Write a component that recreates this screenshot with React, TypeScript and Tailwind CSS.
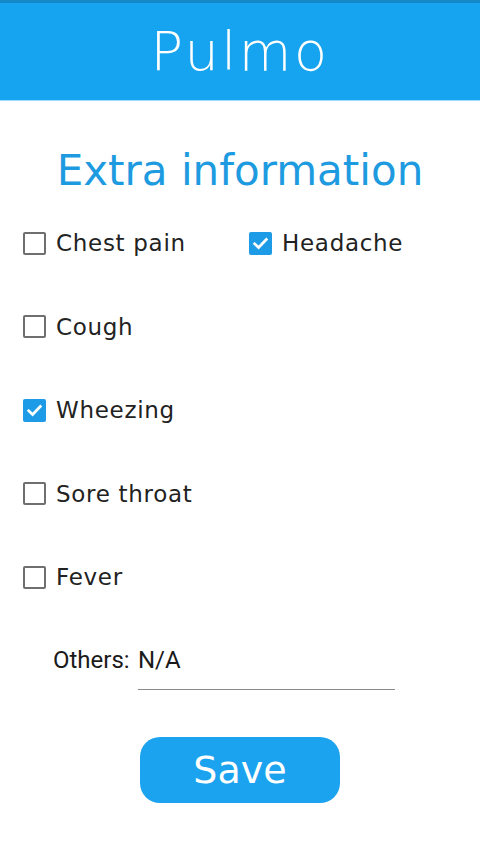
import React from 'react';

const items = [
  { label: 'Chest pain', checked: false },
  { label: 'Cough', checked: false },
  { label: 'Wheezing', checked: true },
  { label: 'Sore throat', checked: false },
  { label: 'Fever', checked: false },
];

function Box({ checked }: { checked: boolean }) {
  if (checked) {
    return (
      <span className="flex h-[23px] w-[23px] items-center justify-center rounded-[2px] bg-[#1e9be6]">
        <svg width="17" height="17" viewBox="0 0 16 16" fill="none">
          <path d="M2.5 8.3 L6.2 11.8 L13.5 4.2" stroke="white" strokeWidth="2.5" strokeLinecap="square" />
        </svg>
      </span>
    );
  }
  return <span className="block h-[23px] w-[23px] rounded-[2px] border-2 border-[#6f6f6f]" />;
}

function Item({ label, checked }: { label: string; checked: boolean }) {
  return (
    <label className="flex items-center gap-[10px]">
      <Box checked={checked} />
      <span
        className="text-[23px] leading-[34px] tracking-[0.7px] text-[#222]"
        style={{ fontFamily: '"DejaVu Sans", sans-serif' }}
      >
        {label}
      </span>
    </label>
  );
}

export default function App() {
  return (
    <div className="min-h-[854px] bg-white">
      {/* header */}
      <header className="flex h-[100px] items-center justify-center bg-[#16a3ef] border-t-[3px] border-[#1488c8] shadow-[0_1px_0_#9fdcfb]">
        <h1
          className="text-[54px] font-extralight text-white tracking-[2.5px] leading-none"
          style={{ fontFamily: '"DejaVu Sans", sans-serif' }}
        >
          Pulmo
        </h1>
      </header>

      <h2
        className="mt-[50px] text-center text-[42px] text-[#1e9be0] leading-none"
        style={{ fontFamily: '"DejaVu Sans", Verdana, sans-serif' }}
      >
        Extra information
      </h2>

      <div className="mt-[34px] flex flex-col gap-[49.5px] pl-[23px]">
        <div className="flex">
          <div className="w-[226px]">
            <Item {...items[0]} />
          </div>
          <Item label="Headache" checked />
        </div>
        {items.slice(1).map((it) => (
          <Item key={it.label} {...it} />
        ))}
      </div>

      <div className="mt-[52px] flex pl-[53px]" style={{ fontFamily: 'Roboto, sans-serif' }}>
        <span className="w-[85px] text-[24px] leading-[28px] text-[#1a1a1a]">Others:</span>
        <div className="w-[257px] border-b-[1.5px] border-[#8a8a8a] pb-[14px]">
          <span className="text-[24px] leading-[28px] text-[#1a1a1a]">N/A</span>
        </div>
      </div>

      <div className="mt-[47px] flex justify-center">
        <button
          className="h-[66px] w-[200px] rounded-[20px] bg-[#1ca3f0] text-[38px] text-white"
          style={{ fontFamily: '"DejaVu Sans", Verdana, sans-serif' }}
        >
          Save
        </button>
      </div>
    </div>
  );
}
